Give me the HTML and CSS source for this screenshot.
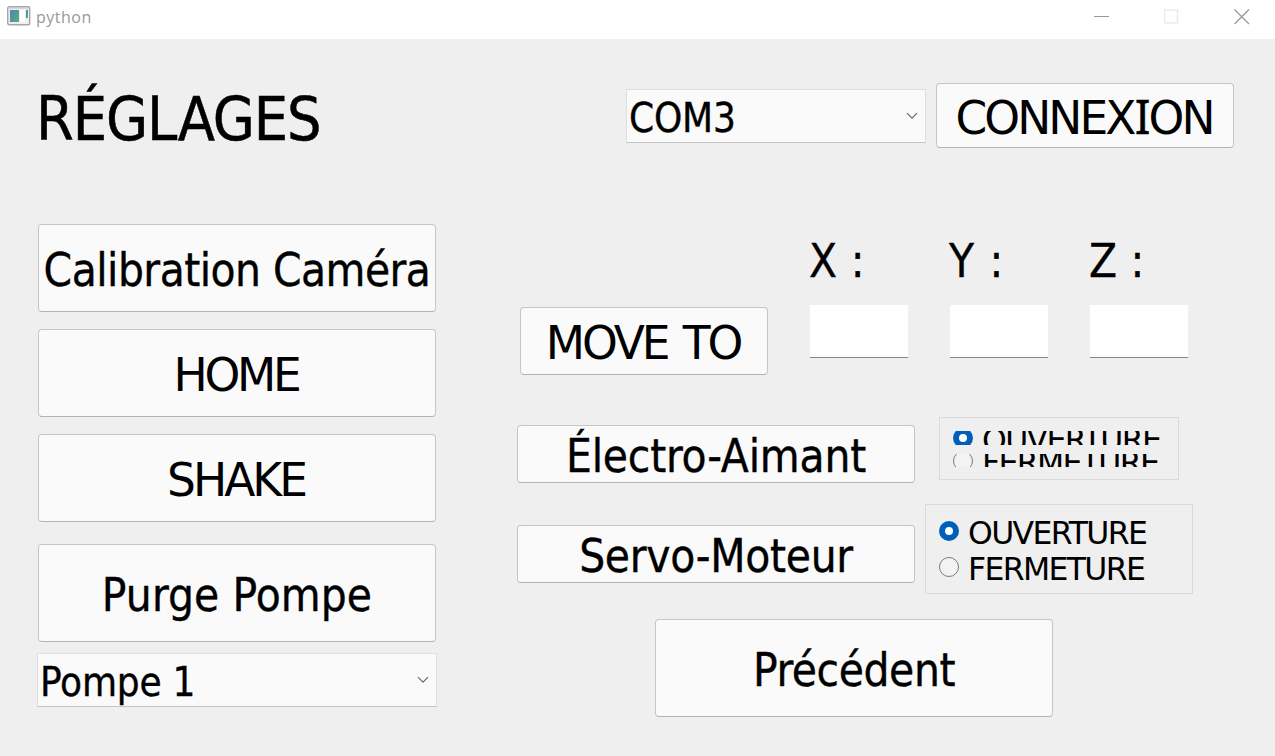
FILE: index.html
```html
<!DOCTYPE html>
<html lang="fr">
<head>
<meta charset="utf-8">
<title>python</title>
<link rel="stylesheet" href="styles.css">
</head>
<body>
<div class="titlebar">
  <svg class="app-icon" width="24" height="20" viewBox="0 0 24 20">
    <defs><linearGradient id="pane" x1="0" y1="0" x2="1" y2="1"><stop offset="0" stop-color="#4f83b4"/><stop offset="1" stop-color="#55b07c"/></linearGradient></defs>
    <rect x=".7" y=".7" width="22" height="18" rx="1.5" fill="#eeeef0" stroke="#a6a6a8" stroke-width="1.400"/>
    <path d="M2 2.500h20" stroke="#d5d7da"/>
    <rect x="3" y="4" width="9" height="12" fill="url(#pane)"/>
    <rect x="13" y="4" width="5" height="12" fill="#fff"/>
    <rect x="19" y="4" width="2" height="8" fill="url(#pane)"/>
  </svg>
  <span class="caption">python</span>
  <div class="controls">
    <svg width="16" height="16" viewBox="0 0 16 16"><path d="M0 7.500h15" stroke="#999" fill="none"/></svg>
    <svg width="16" height="16" viewBox="0 0 16 16"><rect x=".5" y="1" width="13" height="13" stroke="#ebebeb" stroke-width="1.500" fill="none"/></svg>
    <svg width="16" height="16" viewBox="0 0 16 16"><path d="M.5 .5l14.500 14.500M15 .5L.5 15" stroke="#999" stroke-width="1.300" fill="none"/></svg>
  </div>
</div>
<main class="window">
  <header class="header">
    <h1 class="title">RÉGLAGES</h1>
    <div class="select select-port"><span>COM3</span>
      <svg class="chevron" width="12" height="8" viewBox="0 0 12 8"><path d="M1 1.200l5 5 5-5"/></svg></div>
    <button class="btn caps btn-connect"><span>CONNEX<span class="slab">I</span>ON</span></button>
  </header>
  <div class="columns">
    <section class="left">
      <button class="btn btn-tall t-calib">Calibration Caméra</button>
      <button class="btn caps btn-tall t-home">HOME</button>
      <button class="btn caps btn-tall t-shake">SHAKE</button>
      <button class="btn btn-big t-purge">Purge Pompe</button>
      <div class="select select-pump"><span>Pompe 1</span>
        <svg class="chevron" width="12" height="8" viewBox="0 0 12 8"><path d="M1 1.200l5 5 5-5"/></svg></div>
    </section>
    <section class="right">
      <div class="move">
        <button class="btn caps btn-move">MOVE TO</button>
        <div class="axes">
          <label class="axis axis-x">X :<input class="field" type="text"></label>
          <label class="axis axis-y">Y :<input class="field" type="text"></label>
          <label class="axis axis-z">Z :<input class="field" type="text"></label>
        </div>
      </div>
      <div class="device magnet">
        <button class="btn btn-device t-magnet">Électro-Aimant</button>
        <div class="group group-clipped">
          <div class="option"><i class="radio checked"></i><span>OUVERTURE</span></div>
          <div class="option"><i class="radio"></i><span>FERMETURE</span></div>
        </div>
      </div>
      <div class="device servo">
        <button class="btn btn-device t-servo">Servo-Moteur</button>
        <div class="group group-open">
          <div class="option"><i class="radio checked"></i><span>OUVERTURE</span></div>
          <div class="option"><i class="radio"></i><span>FERMETURE</span></div>
        </div>
      </div>
      <button class="btn btn-big btn-back">Précédent</button>
    </section>
  </div>
</main>
</body>
</html>
```
FILE: styles.css
```css
* { box-sizing: border-box; }
body {
  margin: 0;
  width: 1275px;
  height: 756px;
  overflow: hidden;
  background: #efefef;
  color: #000;
  font-family: "DejaVu Sans Condensed", "DejaVu Sans", sans-serif;
}

.titlebar {
  display: flex;
  height: 39px;
  padding: 6px 25px 0 7px;
  background: #fff;
}
.app-icon { flex: none; }
.caption {
  margin-left: 5px;
  font: 16px/23px "Open Sans", "Noto Sans", sans-serif;
  letter-spacing: 0.5px;
  color: #999;
}
.controls {
  display: flex;
  gap: 54px;
  margin-left: auto;
  padding-top: 3px;
}

.header {
  display: flex;
  align-items: center;
  height: 65px;
  margin-top: 44px;
  padding: 0 41px 0 36px;
}
.title {
  margin: 0;
  padding-top: 7px;
  font-size: 60.5px;
  font-weight: 400;
  line-height: 1;
  letter-spacing: -1.1px;
  -webkit-text-stroke: 0.5px #000;
}

.btn {
  display: flex;
  align-items: center;
  justify-content: center;
  flex: none;
  width: 398px;
  padding: 5px 0 0;
  border: 1px solid #c6c6c6;
  border-bottom-color: #b3b3b3;
  border-radius: 4px;
  background: #fafafa;
  color: #000;
  font-family: inherit;
  font-size: 45.5px;
  line-height: 1;
  letter-spacing: -0.4px;
  white-space: pre;
  -webkit-text-stroke: 0.35px #000;
}
.caps {
  padding-right: 2px;
  font-family: "DejaVu Sans", sans-serif;
  -webkit-text-stroke: 0;
}
.btn-connect { width: 298px; height: 65px; margin-left: 10px; padding-top: 6px; letter-spacing: -2.9px; }
.slab { margin: 0 1px; font-family: "Noto Sans", sans-serif; font-size: 46.5px; line-height: 0; -webkit-text-stroke: 0.4px #000; }
.btn-tall { height: 88px; }
.btn-big { height: 98px; }
.btn-device { height: 58px; }
.btn-move { width: 248px; height: 68px; letter-spacing: -3.1px; word-spacing: 4px; }
.t-calib { letter-spacing: -0.53px; }
.t-home { letter-spacing: -3.3px; }
.t-shake { letter-spacing: -2.95px; }
.t-purge { margin-top: 5px; letter-spacing: 0.1px; }
.t-magnet { letter-spacing: -0.2px; }
.t-servo { letter-spacing: -0.3px; }

.select {
  display: flex;
  align-items: center;
  justify-content: space-between;
  height: 54px;
  padding: 0 7px 0 2px;
  border: 1px solid #dedede;
  border-bottom-color: #c4c4c4;
  background: #fafafa;
  font-size: 40px;
  line-height: 1;
  letter-spacing: -0.2px;
}
.select span { padding-top: 4px; -webkit-text-stroke: 0.35px #000; }
.select-port { width: 300px; margin-left: auto; }
.select-pump { width: 400px; margin: -6px 0 0 -1px; }
.chevron { fill: none; stroke: #6a6a6a; stroke-width: 1.2; }

.columns { display: flex; }
.left {
  display: flex;
  flex-direction: column;
  gap: 17px;
  width: 479px;
  margin-left: 38px;
  padding-top: 76px;
}
.right { padding-top: 83px; }

.move {
  display: flex;
  align-items: flex-end;
  gap: 41px;
  height: 144px;
  padding-left: 3px;
}
.axes { display: flex; gap: 41px; align-self: flex-start; }
.axis {
  display: flex;
  flex-direction: column;
  gap: 13px;
  width: 99px;
  padding-top: 1px;
  font-size: 45.5px;
  line-height: 60px;
  white-space: pre;
  -webkit-text-stroke: 0.35px #000;
}
.axis-x { letter-spacing: 0.3px; }
.axis-y { letter-spacing: 1.2px; }
.axis-z { letter-spacing: 0.2px; }
.field {
  width: 98px;
  height: 53px;
  margin-left: 1px;
  padding: 0 4px;
  border: 0;
  border-bottom: 1px solid #868686;
  background: #fff;
  font: inherit;
  outline: 0;
}

.device { display: flex; align-items: flex-start; }
.magnet { gap: 24px; margin-top: 42px; }
.servo { gap: 10px; margin-top: 21px; }
.magnet .btn { margin-top: 8px; }
.servo .btn { margin-top: 21px; }

.group {
  border: 1px solid #dadada;
  font-family: "DejaVu Sans", sans-serif;
  font-size: 31.5px;
  line-height: 36px;
  letter-spacing: -1.65px;
}
.group-clipped { width: 240px; height: 63px; padding: 13px 13px 0; }
.group-open { width: 268px; height: 90px; padding: 8px 13px 0; }
.option { display: flex; align-items: center; gap: 9px; height: 36px; }
.option span { flex: none; padding-top: 4px; }
.group-clipped .option { height: 14px; overflow: hidden; }
.group-clipped .option + .option { height: 13px; margin-top: 9px; }
.radio {
  flex: none;
  width: 20px;
  height: 20px;
  border: 1px solid #7a7a7a;
  border-radius: 50%;
  background: #f3f3f3;
}
.radio.checked { border: 6px solid #005fb8; background: #fff; }

.btn-back { margin: 25px 0 0 138px; }
```
